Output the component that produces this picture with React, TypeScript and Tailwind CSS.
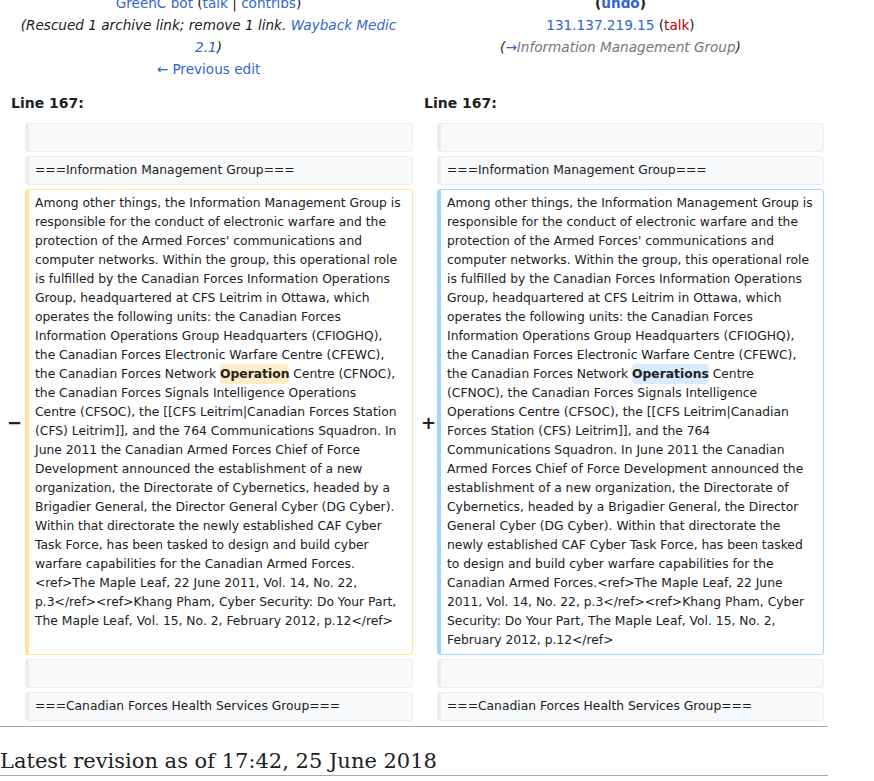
import React from "react";

const leftLines = [
	"Among other things, the Information Management Group is",
	"responsible for the conduct of electronic warfare and the",
	"protection of the Armed Forces' communications and",
	"computer networks. Within the group, this operational role",
	"is fulfilled by the Canadian Forces Information Operations",
	"Group, headquartered at CFS Leitrim in Ottawa, which",
	"operates the following units: the Canadian Forces",
	"Information Operations Group Headquarters (CFIOGHQ),",
	"the Canadian Forces Electronic Warfare Centre (CFEWC),",
	"the Canadian Forces Network {Operation} Centre (CFNOC),",
	"the Canadian Forces Signals Intelligence Operations",
	"Centre (CFSOC), the [[CFS Leitrim|Canadian Forces Station",
	"(CFS) Leitrim]], and the 764 Communications Squadron. In",
	"June 2011 the Canadian Armed Forces Chief of Force",
	"Development announced the establishment of a new",
	"organization, the Directorate of Cybernetics, headed by a",
	"Brigadier General, the Director General Cyber (DG Cyber).",
	"Within that directorate the newly established CAF Cyber",
	"Task Force, has been tasked to design and build cyber",
	"warfare capabilities for the Canadian Armed Forces.",
	"<ref>The Maple Leaf, 22 June 2011, Vol. 14, No. 22,",
	"p.3</ref><ref>Khang Pham, Cyber Security: Do Your Part,",
	"The Maple Leaf, Vol. 15, No. 2, February 2012, p.12</ref>",
];

const rightLines = [
	"Among other things, the Information Management Group is",
	"responsible for the conduct of electronic warfare and the",
	"protection of the Armed Forces' communications and",
	"computer networks. Within the group, this operational role",
	"is fulfilled by the Canadian Forces Information Operations",
	"Group, headquartered at CFS Leitrim in Ottawa, which",
	"operates the following units: the Canadian Forces",
	"Information Operations Group Headquarters (CFIOGHQ),",
	"the Canadian Forces Electronic Warfare Centre (CFEWC),",
	"the Canadian Forces Network {Operations} Centre",
	"(CFNOC), the Canadian Forces Signals Intelligence",
	"Operations Centre (CFSOC), the [[CFS Leitrim|Canadian",
	"Forces Station (CFS) Leitrim]], and the 764",
	"Communications Squadron. In June 2011 the Canadian",
	"Armed Forces Chief of Force Development announced the",
	"establishment of a new organization, the Directorate of",
	"Cybernetics, headed by a Brigadier General, the Director",
	"General Cyber (DG Cyber). Within that directorate the",
	"newly established CAF Cyber Task Force, has been tasked",
	"to design and build cyber warfare capabilities for the",
	"Canadian Armed Forces.<ref>The Maple Leaf, 22 June",
	"2011, Vol. 14, No. 22, p.3</ref><ref>Khang Pham, Cyber",
	"Security: Do Your Part, The Maple Leaf, Vol. 15, No. 2,",
	"February 2012, p.12</ref>",
];

type Kind = "context" | "del" | "add";

const boxStyles: Record<Kind, string> = {
	context: "bg-[#f8f9fa] border-[#eaecf0]",
	del: "bg-white border-[#ffe49c]",
	add: "bg-white border-[#a3d3ff]",
};

const changeStyles: Record<Kind, string> = {
	context: "",
	del: "bg-[#feeec8]",
	add: "bg-[#d8ecff]",
};

const TextLine: React.FC<{ text: string; kind: Kind }> = ({ text, kind }) => {
	const parts = text.split(/\{(.*?)\}/);
	return (
		<div className="whitespace-pre">
			{parts.map((p, i) =>
				i % 2 === 1 ? (
					<span
						key={i}
						className={`font-bold rounded-[4px] py-[3px] ${changeStyles[kind]}`}
					>
						{p}
					</span>
				) : (
					<React.Fragment key={i}>{p}</React.Fragment>
				)
			)}
		</div>
	);
};

const Box: React.FC<{ kind: Kind; lines: string[] }> = ({ kind, lines }) => (
	<div
		className={`rounded-[4px] border border-l-4 px-[6px] py-[4px] text-[12.32px] leading-[19px] ${boxStyles[kind]}`}
	>
		{lines.length === 0 ? (
			<div className="h-[19px]" />
		) : (
			lines.map((l, i) => <TextLine key={i} text={l} kind={kind} />)
		)}
	</div>
);

const Marker: React.FC<{ sign: string; className?: string }> = ({
	sign,
	className,
}) => (
	<div
		className={`flex items-center justify-end text-[18px] font-bold ${className ?? ""}`}
	>
		{sign}
	</div>
);

const link = "text-[#3366cc]";

const App: React.FC = () => {
	return (
		<div className="w-[828px] mt-[-8px] text-[#202122] font-['DejaVu_Sans',sans-serif] bg-white">
			{/* revision headers */}
			<div className="grid grid-cols-[409px_407px] gap-x-[4px] px-[4px] text-[13.6px] leading-[22px] text-center">
				<div>
					<div>
						<span className={link}>GreenC bot</span> (
						<span className={link}>talk</span> |{" "}
						<span className={link}>contribs</span>)
					</div>
					<div className="italic">
						(Rescued 1 archive link; remove 1 link.{" "}
						<span className={link}>Wayback Medic</span>
						<br />
						<span className={link}>2.1</span>)
					</div>
					<div className={link}>← Previous edit</div>
				</div>
				<div>
					<div className="font-bold">
						(<span className={link}>undo</span>)
					</div>
					<div>
						<span className={link}>131.137.219.15</span> (
						<span className="text-[#ba0000]">talk</span>)
					</div>
					<div className="italic">
						(<span className={link}>→</span>
						<span className="text-[#72777d]">Information Management Group</span>)
					</div>
				</div>
			</div>

			{/* line numbers */}
			<div className="grid grid-cols-[409px_407px] gap-x-[4px] px-[4px] mt-[12px] text-[14px] leading-[22px] font-bold">
				<div className="pl-[7px]">Line 167:</div>
				<div className="pl-[7px]">Line 167:</div>
			</div>

			{/* diff rows */}
			<div className="grid grid-cols-[17px_388px_16px_387px] gap-x-[4px] gap-y-[4px] px-[4px] mt-[9px]">
				<div />
				<Box kind="context" lines={[]} />
				<div />
				<Box kind="context" lines={[]} />

				<div />
				<Box kind="context" lines={["===Information Management Group==="]} />
				<div />
				<Box kind="context" lines={["===Information Management Group==="]} />

				<Marker sign="−" className="mr-[-1px]" />
				<Box kind="del" lines={leftLines} />
				<Marker sign="+" className="mr-[-3px]" />
				<Box kind="add" lines={rightLines} />

				<div />
				<Box kind="context" lines={[]} />
				<div />
				<Box kind="context" lines={[]} />

				<div />
				<Box kind="context" lines={["===Canadian Forces Health Services Group==="]} />
				<div />
				<Box kind="context" lines={["===Canadian Forces Health Services Group==="]} />
			</div>

			<div className="mt-[5px] h-px bg-[#a2a9b1]" />

			<h2 className="mt-[21px] border-b border-[#a2a9b1] font-['DejaVu_Serif',serif] text-[21px] leading-[27px] font-normal">
				Latest revision as of 17:42, 25 June 2018
			</h2>
		</div>
	);
};

export default App;
